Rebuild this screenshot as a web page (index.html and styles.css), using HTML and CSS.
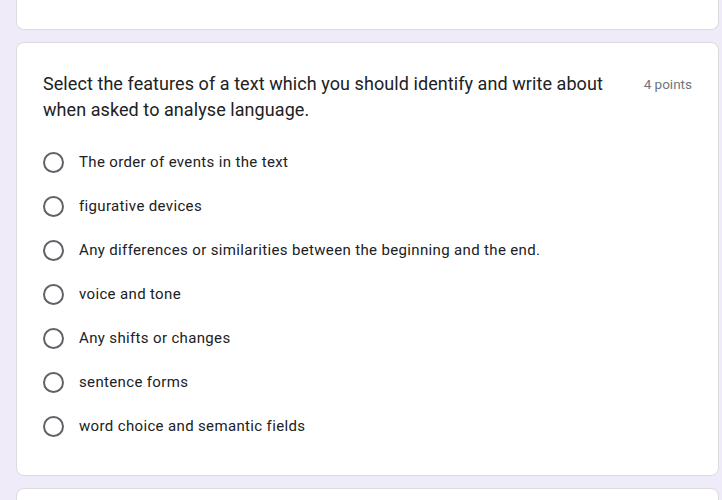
FILE: index.html
```html
<!DOCTYPE html>
<html>
<head>
<meta charset="utf-8">
<link rel="stylesheet" href="styles.css">
</head>
<body>
<div class="page">
  <div class="card card-stub"></div>
  <div class="card question">
    <div class="q-head">
      <div class="q-title">Select the features of a text which you should identify and write about when asked to analyse language.</div>
      <div class="q-points">4 points</div>
    </div>
    <div class="options">
      <label class="option"><span class="radio"></span><span class="opt-text">The order of events in the text</span></label>
      <label class="option"><span class="radio"></span><span class="opt-text">figurative devices</span></label>
      <label class="option"><span class="radio"></span><span class="opt-text">Any differences or similarities between the beginning and the end.</span></label>
      <label class="option"><span class="radio"></span><span class="opt-text">voice and tone</span></label>
      <label class="option"><span class="radio"></span><span class="opt-text">Any shifts or changes</span></label>
      <label class="option"><span class="radio"></span><span class="opt-text">sentence forms</span></label>
      <label class="option"><span class="radio"></span><span class="opt-text">word choice and semantic fields</span></label>
    </div>
  </div>
  <div class="card card-next"></div>
</div>
</body>
</html>
```
FILE: styles.css
```css
html, body {
  margin: 0;
  padding: 0;
  background: #f0ebf8;
  height: 500px;
  overflow: hidden;
}
.page {
  display: flex;
  flex-direction: column;
  gap: 12px;
  padding: 0 3px 0 16px;
  font-family: Roboto, "Liberation Sans", sans-serif;
}
.card {
  background: #fff;
  border: 1px solid #dadce0;
  border-radius: 8px;
  box-sizing: border-box;
}
.card-stub {
  height: 30px;
  border-top: none;
  border-radius: 0 0 8px 8px;
}
.card-next {
  height: 40px;
}
.question {
  padding: 28px 26px 27px 26px;
}
.q-head {
  display: flex;
  align-items: flex-start;
  justify-content: space-between;
  gap: 20px;
}
.q-title {
  font-size: 18px;
  line-height: 26px;
  letter-spacing: 0.07px;
  color: #202124;
  max-width: 585px;
}
.q-points {
  font-size: 13.5px;
  color: #70757a;
  line-height: 26px;
  white-space: nowrap;
}
.options {
  display: flex;
  flex-direction: column;
  margin-top: 17px;
}
.option {
  display: flex;
  align-items: center;
  height: 44px;
  gap: 15px;
}
.radio {
  width: 21px;
  height: 21px;
  box-sizing: border-box;
  border: 2px solid #5f6368;
  border-radius: 50%;
  flex: none;
}
.opt-text {
  font-size: 15px;
  letter-spacing: 0.35px;
  color: #202124;
}
```
